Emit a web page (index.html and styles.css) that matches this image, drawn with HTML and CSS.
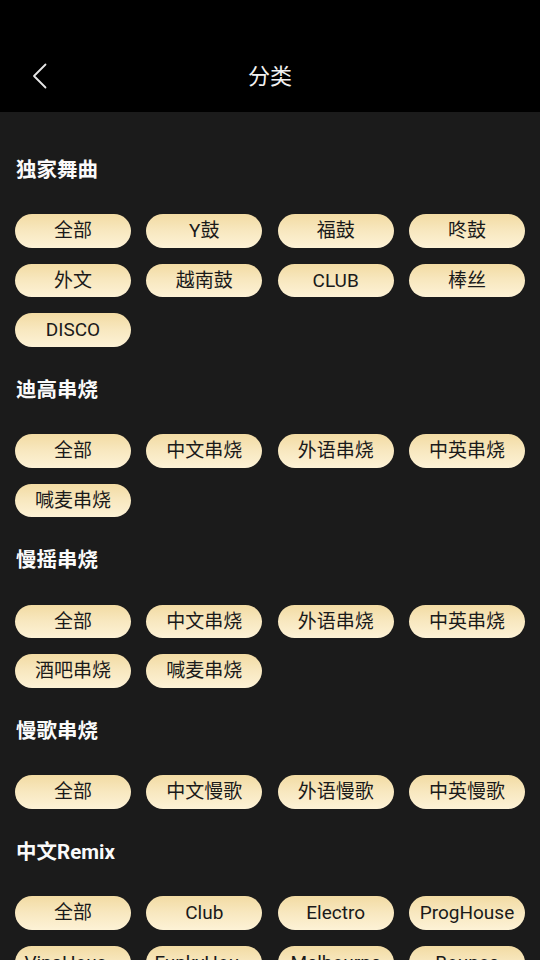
FILE: index.html
```html
<!DOCTYPE html>
<html lang="zh">
<head>
<meta charset="utf-8">
<title>分类</title>
<link rel="stylesheet" href="styles.css">
</head>
<body>
<header class="topbar">
  <div class="toolbar">
    <span class="back">
      <svg width="16" height="26" viewBox="0 0 16 26"><path d="M13.5 1.5 L2 13 L13.5 24.5" fill="none" stroke="#e6e6e6" stroke-width="1.8" stroke-linecap="round" stroke-linejoin="round"/></svg>
    </span>
    <h1 class="title">分类</h1>
  </div>
</header>
<main class="content">
  <section class="group">
    <h2 class="group-title">独家舞曲</h2>
    <div class="tags">
      <span class="tag">全部</span><span class="tag">Y鼓</span><span class="tag">福鼓</span><span class="tag">咚鼓</span>
      <span class="tag">外文</span><span class="tag">越南鼓</span><span class="tag">CLUB</span><span class="tag">棒丝</span>
      <span class="tag">DISCO</span>
    </div>
  </section>
  <section class="group">
    <h2 class="group-title">迪高串烧</h2>
    <div class="tags">
      <span class="tag">全部</span><span class="tag">中文串烧</span><span class="tag">外语串烧</span><span class="tag">中英串烧</span>
      <span class="tag">喊麦串烧</span>
    </div>
  </section>
  <section class="group">
    <h2 class="group-title">慢摇串烧</h2>
    <div class="tags">
      <span class="tag">全部</span><span class="tag">中文串烧</span><span class="tag">外语串烧</span><span class="tag">中英串烧</span>
      <span class="tag">酒吧串烧</span><span class="tag">喊麦串烧</span>
    </div>
  </section>
  <section class="group">
    <h2 class="group-title">慢歌串烧</h2>
    <div class="tags">
      <span class="tag">全部</span><span class="tag">中文慢歌</span><span class="tag">外语慢歌</span><span class="tag">中英慢歌</span>
    </div>
  </section>
  <section class="group">
    <h2 class="group-title">中文Remix</h2>
    <div class="tags">
      <span class="tag">全部</span><span class="tag">Club</span><span class="tag">Electro</span><span class="tag">ProgHouse</span>
      <span class="tag">VinaHous...</span><span class="tag">FunkyHou...</span><span class="tag">Melbourne</span><span class="tag">Bounce</span>
    </div>
  </section>
</main>
</body>
</html>
```
FILE: styles.css
```css
html, body {
  margin: 0;
  padding: 0;
  background: #1b1b1b;
  height: 960px;
  overflow: hidden;
  font-family: Roboto, "Noto Sans CJK SC", sans-serif;
}
.topbar {
  background: #000;
  height: 112px;
  padding-top: 40px;
  box-sizing: border-box;
}
.toolbar {
  height: 72px;
  display: flex;
  align-items: center;
  justify-content: center;
  position: relative;
}
.back {
  position: absolute;
  left: 32px;
  top: 23px;
  width: 16px;
  height: 26px;
  display: flex;
}
.title {
  margin: 0;
  font-size: 22px;
  font-weight: 400;
  color: #f2f2f2;
  line-height: 28px;
  margin-top: 2px;
}
.content {
  padding: 15px 15px 0;
}
.group {
  padding-top: 29px;
}
.group:first-child {
  padding-top: 28.5px;
}
.group-title {
  margin: 0 0 30.5px 1px;
  font-size: 20.5px;
  line-height: 28px;
  font-weight: 700;
  color: #fafafa;
}
.tags {
  display: grid;
  grid-template-columns: repeat(4, 1fr);
  column-gap: 15.3px;
  row-gap: 16px;
}
.tag {
  height: 33.5px;
  border-radius: 17px;
  background: linear-gradient(180deg, #f2dba3 0%, #f8e8c0 50%, #fdf2d6 100%);
  color: #1a1a1a;
  font-size: 19px;
  line-height: 1;
  display: flex;
  align-items: center;
  justify-content: center;
  white-space: nowrap;
  overflow: hidden;
}
```
